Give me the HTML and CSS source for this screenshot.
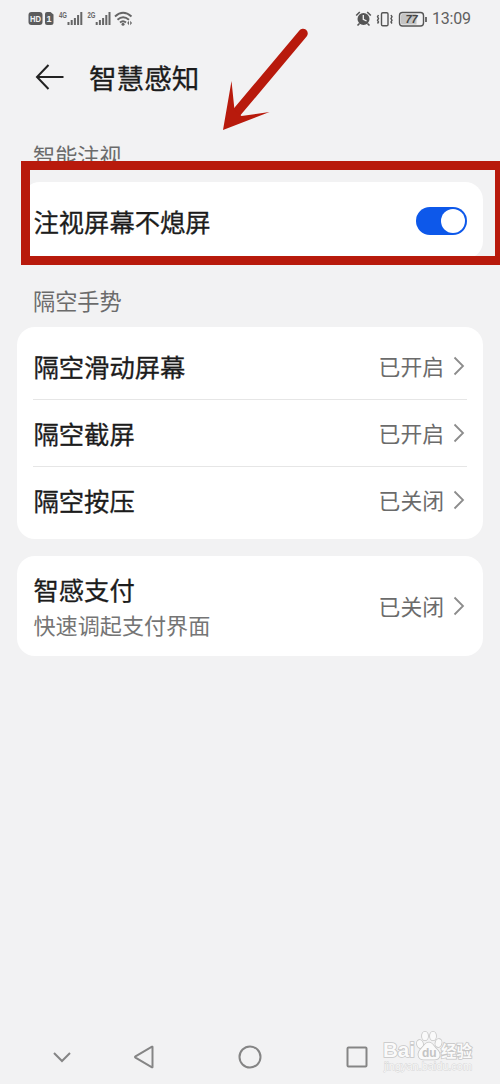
FILE: index.html
```html
<!DOCTYPE html>
<html lang="zh-CN">
<head>
    <meta charset="UTF-8">
    <meta name="viewport" content="width=device-width, initial-scale=1.0">
    <title>智慧感知</title>
    <link rel="stylesheet" href="styles.css">
</head>
<body>
    <div class="screen">
        <div class="status-bar">
            <svg class="status-left" width="106" height="20" viewBox="0 0 106 20">
                <rect x="0.5" y="3" width="14" height="13" rx="3" fill="#5c5c5c"/>
                <text x="2" y="13" class="badge-text" textLength="11" lengthAdjust="spacingAndGlyphs">HD</text>
                <path d="M19 3h3.500l3 2.500v8q0 2.500-2.500 2.500h-4q-2 0-2-2v-9q0-2 2-2z" fill="#5c5c5c"/>
                <text x="18.500" y="13" class="badge-text">1</text>
                <text x="31" y="9" class="net-text" textLength="8" lengthAdjust="spacingAndGlyphs">4G</text>
                <g stroke="#666" stroke-width="2">
                    <path d="M40.500 16v-3M43.700 16v-5M46.900 16v-7M50.100 16v-10M53.300 16v-13"/>
                    <path d="M68.700 16v-3M71.900 16v-5M75.100 16v-7M78.300 16v-10M81.500 16v-13"/>
                </g>
                <text x="59.500" y="9" class="net-text" textLength="8" lengthAdjust="spacingAndGlyphs">2G</text>
                <g fill="none" stroke="#666" stroke-width="1.900">
                    <path d="M87 7.500q8-7.500 16.500 0M89.500 10.700q5.500-5 11.500 0M92 13.500q3-2.500 6 0"/>
                </g>
                <circle cx="95" cy="15.300" r="1.500" fill="#666"/>
                <path d="M101 11.800l-1.800 2.200 1.800 2.200zM102.200 11.800l1.800 2.200-1.800 2.200z" fill="#666"/>
            </svg>
            <div class="status-right">
                <svg width="72" height="20" viewBox="0 0 72 20">
                    <circle cx="8.500" cy="10" r="6" fill="#555"/>
                    <path d="M1.200 6.500l3.600-3.500M15.800 6.500l-3.600-3.500M4.500 14.500l-2 2M12.500 14.500l2 2" stroke="#555" stroke-width="1.600" fill="none"/>
                    <path d="M8.300 6v4.300l3.300 1.700" stroke="#f2f2f3" stroke-width="1.300" fill="none"/>
                    <rect x="26.500" y="3.700" width="6.500" height="13" rx="1.300" fill="none" stroke="#555" stroke-width="1.400"/>
                    <path d="M23.500 6l-1 1.800 1 1.700-1 1.800 1 1.700-1 1.500M36 6l1 1.800-1 1.700 1 1.800-1 1.700 1 1.500" fill="none" stroke="#555" stroke-width="1.400"/>
                    <rect x="44.500" y="3.500" width="24" height="13.500" rx="3" fill="none" stroke="#555" stroke-width="1.400"/>
                    <path d="M47.500 5h14v10.500h-14q-1.500 0-1.500-1.500v-7.500q0-1.500 1.500-1.500z" fill="#c4c4c4"/>
                    <path d="M71 8v5" stroke="#555" stroke-width="1.700"/>
                    <text x="50.500" y="14.200" class="battery-text">77</text>
                </svg>
                <span class="clock">13:09</span>
            </div>
        </div>

        <div class="header">
            <svg width="30" height="28" viewBox="0 0 30 28">
                <path d="M28.500 14H2.500M13.500 2L2 14l11.500 12" fill="none" stroke="#222" stroke-width="2"/>
            </svg>
            <h1>智慧感知</h1>
        </div>

        <h2 class="section-title">智能注视</h2>
        <div class="card card-gaze">
            <div class="row">
                <span class="row-title">注视屏幕不熄屏</span>
                <span class="toggle"></span>
            </div>
        </div>

        <h2 class="section-title section-gesture">隔空手势</h2>
        <div class="card card-gesture">
            <div class="row">
                <span class="row-title">隔空滑动屏幕</span>
                <span class="row-status">已开启</span>
                <svg class="chevron" width="12" height="20" viewBox="0 0 12 20"><path d="M1.500 1.500l8.500 8.500-8.500 8.500"/></svg>
            </div>
            <div class="row">
                <span class="row-title">隔空截屏</span>
                <span class="row-status">已开启</span>
                <svg class="chevron" width="12" height="20" viewBox="0 0 12 20"><path d="M1.500 1.500l8.500 8.500-8.500 8.500"/></svg>
            </div>
            <div class="row">
                <span class="row-title">隔空按压</span>
                <span class="row-status">已关闭</span>
                <svg class="chevron" width="12" height="20" viewBox="0 0 12 20"><path d="M1.500 1.500l8.500 8.500-8.500 8.500"/></svg>
            </div>
        </div>

        <div class="card card-pay">
            <div class="row">
                <div class="row-text">
                    <span class="row-title">智感支付</span>
                    <span class="row-desc">快速调起支付界面</span>
                </div>
                <span class="row-status">已关闭</span>
                <svg class="chevron" width="12" height="20" viewBox="0 0 12 20"><path d="M1.500 1.500l8.500 8.500-8.500 8.500"/></svg>
            </div>
        </div>

        <div class="nav-bar">
            <svg class="nav-hide" width="18" height="24" viewBox="0 0 18 24"><path d="M1 8l8 8 8-8"/></svg>
            <svg width="20" height="24" viewBox="0 0 20 24"><path d="M18.500 2v20q0 .5-.5.300L1.500 12.700q-1-.7 0-1.400L18 1.700q.5-.2.500.3z"/></svg>
            <svg width="24" height="24" viewBox="0 0 24 24"><circle cx="12" cy="12" r="10.500"/></svg>
            <svg width="22" height="24" viewBox="0 0 22 24"><rect x="1.500" y="2.500" width="19" height="19" rx="1"/></svg>
        </div>

        <!-- annotations over the screen -->
        <div class="highlight"></div>
        <svg class="arrow" width="100" height="112" viewBox="0 0 100 112">
            <path d="M83 13.500L17 92" stroke="#b81a0c" stroke-width="9.500" stroke-linecap="round"/>
            <path d="M3 110L11.500 61l3 29 7 6L49.500 92z" fill="#b81a0c"/>
        </svg>
        <svg class="watermark" width="96" height="48" viewBox="0 0 96 48">
            <g class="mark">
                <text x="2" y="32" class="mark-latin" textLength="32" lengthAdjust="spacingAndGlyphs">Bai</text>
                <ellipse cx="39" cy="19" rx="3" ry="4" transform="rotate(-15 39 19)"/>
                <ellipse cx="44" cy="11" rx="3" ry="4.300"/>
                <ellipse cx="52" cy="11" rx="3" ry="4.300"/>
                <ellipse cx="57.500" cy="18" rx="3" ry="4" transform="rotate(15 57.500 18)"/>
                <path d="M48 17.500c-3.500 0-5 3.500-7.500 6-5 4.500-3.500 11 2 11h11c6 0 7-6 2-10.500-3-2.700-4-6.500-7.500-6.500z"/>
                <text x="60" y="32" class="mark-cjk">经验</text>
            </g>
            <text x="41" y="31.500" class="mark-du">du</text>
            <text x="3" y="45" class="mark-url" textLength="88" lengthAdjust="spacingAndGlyphs">jingyan.baidu.com</text>
        </svg>
    </div>
</body>
</html>
```
FILE: styles.css
```css
* {
    box-sizing: border-box;
}
body {
    margin: 0;
    font-family: "Noto Sans CJK SC", sans-serif;
    color: #1c1c1c;
    background-color: #f2f2f3;
}
.screen {
    position: relative;
    display: flex;
    flex-direction: column;
    width: 500px;
    height: 1084px;
    overflow: hidden;
}
.status-bar {
    display: flex;
    justify-content: space-between;
    align-items: center;
    height: 38px;
    padding: 0 29px 0 28px;
}
.status-right {
    display: flex;
    align-items: center;
    gap: 5px;
}
.clock {
    width: 39px;
    font-family: Roboto, sans-serif;
    font-size: 16px;
    line-height: 20px;
    letter-spacing: -0.2px;
    color: #606060;
}
.badge-text {
    font: bold 9px "Liberation Sans", sans-serif;
    fill: #f2f2f3;
}
.net-text {
    font: bold 9px "Liberation Sans", sans-serif;
    fill: #666;
}
.battery-text {
    font: italic bold 11px "Liberation Sans", sans-serif;
    fill: #444;
}
.header {
    display: flex;
    align-items: center;
    gap: 24px;
    height: 77px;
    padding-left: 35px;
}
h1 {
    margin: 0;
    font-size: 27.6px;
    font-weight: 400;
    line-height: 40px;
    -webkit-text-stroke: 0.3px #1c1c1c;
}
.section-title {
    margin: 24px 0 0 33px;
    font-size: 22.2px;
    font-weight: 400;
    line-height: 32px;
    color: #6b6b6b;
}
.card {
    margin: 0 17px;
    padding: 0 16px;
    border-radius: 18px;
    background-color: #fff;
}
.card-gaze {
    margin: 11px 17px 0 22px;
    padding-left: 11px;
    height: 77px;
}
.card-gaze .row {
    height: 77px;
}
.section-gesture {
    margin-top: 25px;
}
.card-gesture {
    height: 212px;
    margin-top: 11px;
    padding-top: 5px;
}
.card-pay {
    height: 100px;
    margin-top: 17px;
}
.row {
    display: flex;
    align-items: center;
    height: 67px;
}
.card-gesture .row + .row {
    border-top: 1px solid #e6e6e6;
}
.card-pay .row {
    height: 100px;
}
.row-title {
    flex: 1;
    padding-left: 0.5px;
    font-size: 25.3px;
    line-height: 36px;
    -webkit-text-stroke: 0.3px #1c1c1c;
}
.row-text {
    display: flex;
    flex: 1;
    flex-direction: column;
}
.row-desc {
    padding-left: 0.5px;
    font-size: 22.1px;
    line-height: 34px;
    color: #757575;
}
.row-status {
    font-size: 21.8px;
    line-height: 32px;
    color: #6b6b6b;
}
.chevron {
    margin: 0 2px 0 9px;
    fill: none;
    stroke: #8c8c8c;
    stroke-width: 1.8;
}
.toggle {
    width: 51px;
    height: 28px;
    padding: 2px;
    border-radius: 14px;
    background-color: #0d58ea;
}
.toggle::after {
    content: "";
    display: block;
    width: 24px;
    height: 24px;
    margin-left: 23px;
    border-radius: 50%;
    background-color: #fff;
}
.nav-bar {
    display: flex;
    align-items: center;
    gap: 84px;
    height: 54px;
    margin: auto 0 0 53px;
    fill: none;
    stroke: #858585;
    stroke-width: 2;
}
.nav-hide {
    margin-right: -21px;
}
.highlight {
    position: absolute;
    top: 161px;
    left: 21px;
    width: 483px;
    height: 104px;
    border: 9px solid #b81a0c;
}
.arrow {
    position: absolute;
    top: 20px;
    left: 220px;
    fill: none;
}
.watermark {
    position: absolute;
    top: 1025px;
    left: 381px;
}
.mark {
    fill: #fafafa;
    stroke: #c6c6c6;
    stroke-width: 1.6;
    paint-order: stroke;
}
.mark-latin {
    font: bold 20px "Liberation Sans", sans-serif;
}
.mark-cjk {
    font: bold 15.5px "Noto Sans CJK SC", sans-serif;
}
.mark-du {
    font: bold 12px "Liberation Sans", sans-serif;
    fill: #c4c4c4;
}
.mark-url {
    font: 10px "Liberation Sans", sans-serif;
    fill: #f8f8f8;
    stroke: #d4d4d4;
    stroke-width: 0.8;
    paint-order: stroke;
}
```
